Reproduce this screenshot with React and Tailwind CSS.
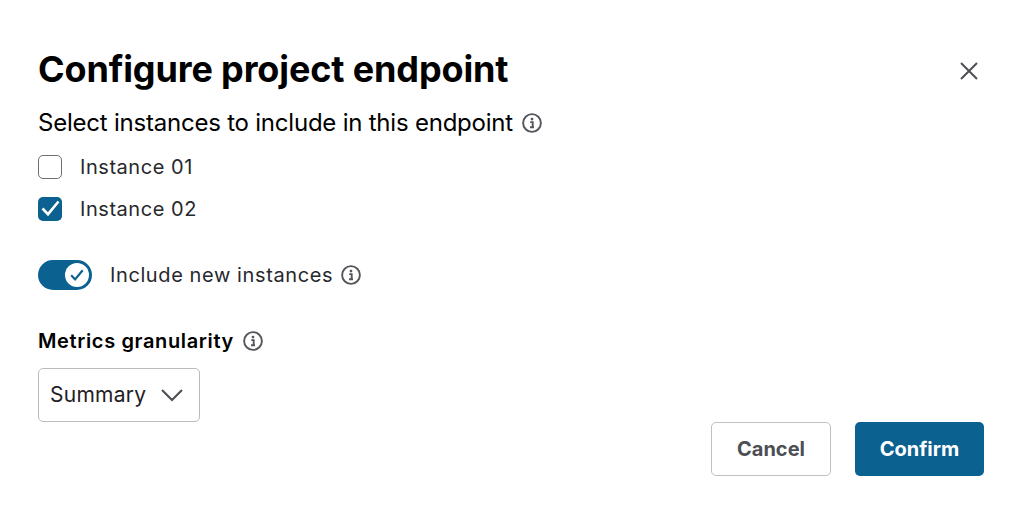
import React, { useState } from 'react';

function InfoIcon() {
  return (
    <svg width="20" height="20" viewBox="0 0 20 20" fill="none" className="shrink-0 text-[#54565c]">
      <circle cx="10" cy="10" r="8.9" stroke="currentColor" strokeWidth="1.9" />
      <circle cx="10" cy="6.1" r="1.4" fill="currentColor" />
      <path d="M8.2 9.1h2.5v5M8 14.3h4" stroke="currentColor" strokeWidth="1.9" />
    </svg>
  );
}

function CheckRow({ label, checked, onToggle }) {
  return (
    <label className="flex items-center gap-[18px] h-6 text-[20px] text-[#27282c] tracking-[0.55px]" onClick={onToggle}>
      {checked ? (
        <span className="w-6 h-6 rounded-[5px] bg-[#0b6190] flex items-center justify-center">
          <svg width="24" height="24" viewBox="0 0 24 24" fill="none">
            <path d="M4.5 11.5l5.5 5.7L20.5 4.5" stroke="white" strokeWidth="2.6" />
          </svg>
        </span>
      ) : (
        <span className="w-6 h-6 rounded-[5px] border border-[#6f7076] bg-white"></span>
      )}
      {label}
    </label>
  );
}

export default function App() {
  const [first, setFirst] = useState(false);
  const [second, setSecond] = useState(true);

  return (
    <div className="w-[1033px] h-[519px] bg-white pl-[38px] pr-[49px] pt-[44px] font-['Inter','Liberation_Sans',sans-serif] overflow-hidden">
      <header className="flex items-center justify-between h-[50px]">
        <h1 className="text-[36px] leading-[50px] font-bold text-black tracking-[-0.13px]">Configure project endpoint</h1>
        <button className="mr-[5px] mt-[4px] text-[#4d4f55]">
          <svg width="20" height="20" viewBox="0 0 20 20" fill="none">
            <path d="M2 2l16 16M18 2L2 18" stroke="currentColor" strokeWidth="2" />
          </svg>
        </button>
      </header>

      <div className="flex items-center gap-[9px] mt-[14px] h-[30px] text-[24px] text-black tracking-[-0.22px]">
        Select instances to include in this endpoint
        <InfoIcon />
      </div>

      <div className="flex flex-col gap-[18px] mt-[17px]">
        <CheckRow label="Instance 01" checked={first} onToggle={() => setFirst(!first)} />
        <CheckRow label="Instance 02" checked={second} onToggle={() => setSecond(!second)} />
      </div>

      <div className="flex items-center mt-[39px] h-[30px]">
        <div className="w-[54px] h-[30px] rounded-full bg-[#0b6190] flex items-center justify-end pr-[3px]">
          <span className="w-6 h-6 rounded-full bg-white flex items-center justify-center">
            <svg width="16" height="16" viewBox="0 0 16 16" fill="none">
              <path d="M2.2 8.2l3.9 4.2 7.6-9.2" stroke="#0b6190" strokeWidth="2.2" />
            </svg>
          </span>
        </div>
        <span className="ml-[18px] mr-2 text-[20px] text-[#27282c] tracking-[0.6px]">Include new instances</span>
        <InfoIcon />
      </div>

      <div className="flex items-center gap-[9px] mt-[36px] h-[30px] text-[20px] font-semibold text-black tracking-[0.63px]">
        Metrics granularity
        <InfoIcon />
      </div>

      <button className="mt-[12px] w-[162px] h-[54px] rounded-[5px] border border-[#b9bbc0] bg-white flex items-center justify-between pl-[11px] pr-[15px] text-[21px] text-[#1f2024] tracking-[0.25px]">
        Summary
        <svg width="24" height="14" viewBox="0 0 24 14" fill="none" className="text-[#4d4f55]">
          <path d="M2 2l10 10L22 2" stroke="currentColor" strokeWidth="2.1" />
        </svg>
      </button>

      <footer className="flex justify-end gap-6">
        <button className="w-[120px] h-[54px] rounded-[5px] border border-[#bfc0c4] bg-white text-[20px] font-bold text-[#4c4e54]">Cancel</button>
        <button className="w-[129px] h-[54px] rounded-[5px] bg-[#0b6190] text-[20px] font-bold text-white">Confirm</button>
      </footer>
    </div>
  );
}
